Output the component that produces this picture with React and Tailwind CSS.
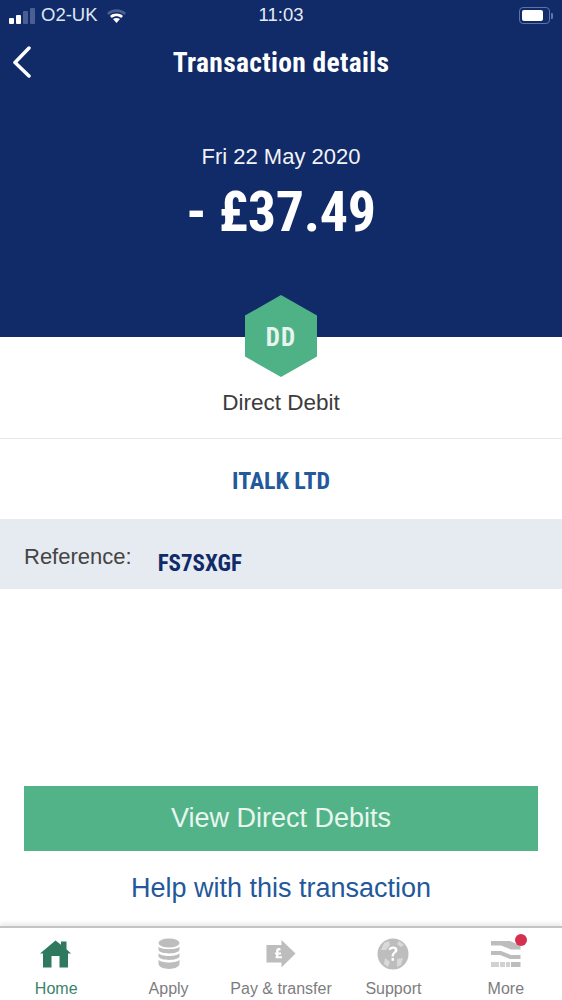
import React from "react";

const narrow = "font-['Liberation_Sans_Narrow','Roboto_Condensed','Liberation_Sans',sans-serif]";

const HomeIcon = () => (
  <svg width="32" height="28" viewBox="0 0 32 28">
    <path d="M0 13.500 L15.500 0.500 L21 4.800 L21 1.500 L26.500 1.500 L26.500 9.200 L31 13.500 L28 13.500 L28 27.500 L19.500 27.500 L19.500 16 L11.500 16 L11.500 27.500 L3 27.500 L3 13.500 Z" fill="#2f7a5f" />
  </svg>
);

const ApplyIcon = () => (
  <svg width="24" height="32" viewBox="0 0 24 32">
    <ellipse cx="12" cy="5" rx="10.500" ry="4.500" fill="#bdbdbd" />
    <path d="M1.500 8.500 C3 12 21 12 22.500 8.500 L22.500 12 C21 16.500 3 16.500 1.500 12 Z" fill="#bdbdbd" />
    <path d="M1.500 15 C3 19 21 19 22.500 15 L22.500 18.500 C21 23 3 23 1.500 18.500 Z" fill="#bdbdbd" />
    <path d="M1.500 21.500 C3 25.500 21 25.500 22.500 21.500 L22.500 26 C21 32.500 3 32.500 1.500 26 Z" fill="#bdbdbd" />
  </svg>
);

const PayIcon = () => (
  <svg width="30" height="30" viewBox="0 0 32 30">
    <path d="M0.500 5.500 L16.500 5.500 L16.500 0 L31.500 14.500 L16.500 29.500 L16.500 24 L0.500 24 Z" fill="#bdbdbd" />
    <path d="M15.500 9 C12.500 8 10.500 9.500 10.800 12.500 L10.800 13.500 L9.500 13.500 L9.500 15.500 L10.800 15.500 L10 19.500 L17 19.500 L17 17.500 L13 17.500 L13.500 15.500 L16 15.500 L16 13.500 L13.300 13.500 C13 11 14 10.500 15.500 11.200 Z" fill="#fff" />
  </svg>
);

const SupportIcon = () => (
  <svg width="32" height="32" viewBox="0 0 32 32">
    <circle cx="16" cy="16" r="15.500" fill="#bdbdbd" />
    <path d="M7 5 L12 3 L13 7 L9 12 L4 12 Z M22 3 L27 7 L24 9 L20 6 Z M20 21 L26 20 L24 27 L20 29 Z M8 20 L13 24 L11 29 L7 26 Z" fill="#d9d9d9" />
    <path d="M11.500 11.500 C12 7.500 20.500 7.500 20.500 12 C20.500 15 16.800 15 16.800 18.500 L14.500 18.500 C14.500 14.500 17.800 14 17.800 12 C17.800 10.300 14.500 10.300 14 12 Z" fill="#fff" />
    <rect x="14.500" y="20" width="2.500" height="2.800" fill="#fff" />
  </svg>
);

const MoreIcon = () => (
  <svg width="30" height="28" viewBox="0 0 30 28">
    <path d="M0 1 L19 1 L29.500 5.500 L29.500 9.500 L20 9.500 L10 5.500 L0 5.500 Z" fill="#bdbdbd" />
    <path d="M0 11 L10 11 L20 15 L29.500 15 L29.500 19 L19 19 L9 15 L0 15 Z" fill="#bdbdbd" />
    <rect x="0" y="22" width="8" height="5" fill="#bdbdbd" opacity="0.700" />
    <rect x="9" y="22" width="5" height="5" fill="#bdbdbd" opacity="0.700" />
    <rect x="15" y="22" width="4" height="5" fill="#bdbdbd" opacity="0.700" />
    <rect x="20" y="22" width="9.500" height="5" fill="#bdbdbd" />
  </svg>
);

const StatusBar = () => (
  <div className="flex items-center h-[31px] pl-[9px] pr-[9px] relative text-[#dfe6f5]">
    <div className="flex items-end gap-[2px] h-[16px]">
      <span className="w-[5px] h-[6px] bg-white rounded-[1px]" />
      <span className="w-[5px] h-[9px] bg-white rounded-[1px]" />
      <span className="w-[5px] h-[13px] bg-[#4a5f92] rounded-[1px]" />
      <span className="w-[5px] h-[16px] bg-[#4a5f92] rounded-[1px]" />
    </div>
    <span className="ml-[6px] text-[18.500px] leading-none">O2-UK</span>
    <svg className="ml-[8px]" width="21" height="16" viewBox="0 0 20 16">
      <path d="M0.500 5 C5.500 0 14.500 0 19.500 5 L17.800 7 C13.500 3 6.500 3 2.200 7 Z" fill="#4a5f92" />
      <path d="M3.500 8 C7 4.800 13 4.800 16.500 8 L14.700 10 C12 7.800 8 7.800 5.300 10 Z" fill="#fff" />
      <path d="M6.500 11 C8.500 9.500 11.500 9.500 13.500 11 L10 15 Z" fill="#fff" />
    </svg>
    <span className="absolute left-0 right-0 text-center text-[18.500px] leading-none text-[#e6ebf7]">11:03</span>
    <div className="ml-auto flex items-center">
      <div className="w-[31px] h-[17px] rounded-[4px] border border-[#5d74a8] p-[2px]">
        <div className="w-[21px] h-full bg-white rounded-[2px]" />
      </div>
      <span className="w-[2px] h-[6px] ml-[1px] bg-[#5d74a8] rounded-r-[1px]" />
    </div>
  </div>
);

const Tab = ({ icon, label, active, dot }) => (
  <div className="flex-1 flex flex-col items-center">
    <div className="relative h-[38px] flex items-center justify-center">
      {icon}
      {dot && <span className="absolute -top-[1px] -right-[6px] w-[12px] h-[12px] rounded-full bg-[#d5304f]" />}
    </div>
    <span className={`mt-[6px] text-[16px] leading-[20px] ${active ? "text-[#3a8468]" : "text-[#7d7d7d]"}`}>{label}</span>
  </div>
);

export default function App() {
  return (
    <div className="w-[562px] h-[1000px] flex flex-col bg-white font-['Liberation_Sans',sans-serif] overflow-hidden">
      <div className="h-[337px] shrink-0 bg-[#112a68] text-white">
        <StatusBar />
        <div className="relative flex items-center justify-center h-[62px]">
          <svg className="absolute left-[12px] top-[15px]" width="20" height="32" viewBox="0 0 20 32">
            <path d="M17 2 L3 16.500 L17 30" fill="none" stroke="#fff" strokeWidth="3.500" strokeLinecap="round" strokeLinejoin="round" />
          </svg>
          <span className={`${narrow} font-bold text-[27.500px] leading-none tracking-[0.3px] mt-[2px]`}>Transaction details</span>
        </div>
        <div className="mt-[51px] text-center text-[22px] leading-[26px] text-[#f1f3f8]">Fri 22 May 2020</div>
        <div className={`${narrow} font-bold mt-[12px] text-center text-[56px] leading-[60px] tracking-[-0.3px]`}>- £37.49</div>
      </div>

      <div className="flex flex-col items-center -mt-[42px]">
        <div className="relative w-[72px] h-[82px] flex items-center justify-center">
          <svg className="absolute inset-0" width="72" height="82" viewBox="0 0 72 82">
            <polygon points="36,0 72,20.500 72,61.500 36,82 0,61.500 0,20.500" fill="#4fb286" />
          </svg>
          <span className={`${narrow} relative font-bold text-[25px] leading-none tracking-[1.2px] text-[#e7f5ee] mt-[2px]`}>DD</span>
        </div>
        <div className="mt-[13px] text-[22.500px] leading-[26px] text-[#3c3c3c]">Direct Debit</div>
      </div>

      <div className="mt-[22px] border-t border-[#e8e8e8] h-[81px] flex items-center justify-center">
        <span className={`${narrow} font-bold text-[24px] leading-none text-[#23599b] mt-[3px]`}>ITALK LTD</span>
      </div>

      <div className="h-[70px] bg-[#e6ebf2] flex items-center pl-[24px]">
        <span className="text-[22px] leading-none text-[#444] mt-[5px]">Reference:</span>
        <span className={`${narrow} font-bold ml-[26px] text-[23px] leading-none text-[#112a68] mt-[19px]`}>FS7SXGF</span>
      </div>

      <div className="flex-1" />

      <div className="mx-[24px] h-[65px] bg-[#52b388] flex items-center justify-center text-[27px] text-[#e9f6ef]">
        View Direct Debits
      </div>
      <div className="h-[75px] flex items-center justify-center text-[27px] text-[#23599b]">Help with this transaction</div>

      <div className="h-[74px] shrink-0 border-t-2 border-[#c4c4c4] shadow-[0_-3px_4px_rgba(0,0,0,0.08)] flex pt-[7px]">
        <Tab icon={<HomeIcon />} label="Home" active />
        <Tab icon={<ApplyIcon />} label="Apply" />
        <Tab icon={<PayIcon />} label="Pay & transfer" />
        <Tab icon={<SupportIcon />} label="Support" />
        <Tab icon={<MoreIcon />} label="More" dot />
      </div>
    </div>
  );
}
